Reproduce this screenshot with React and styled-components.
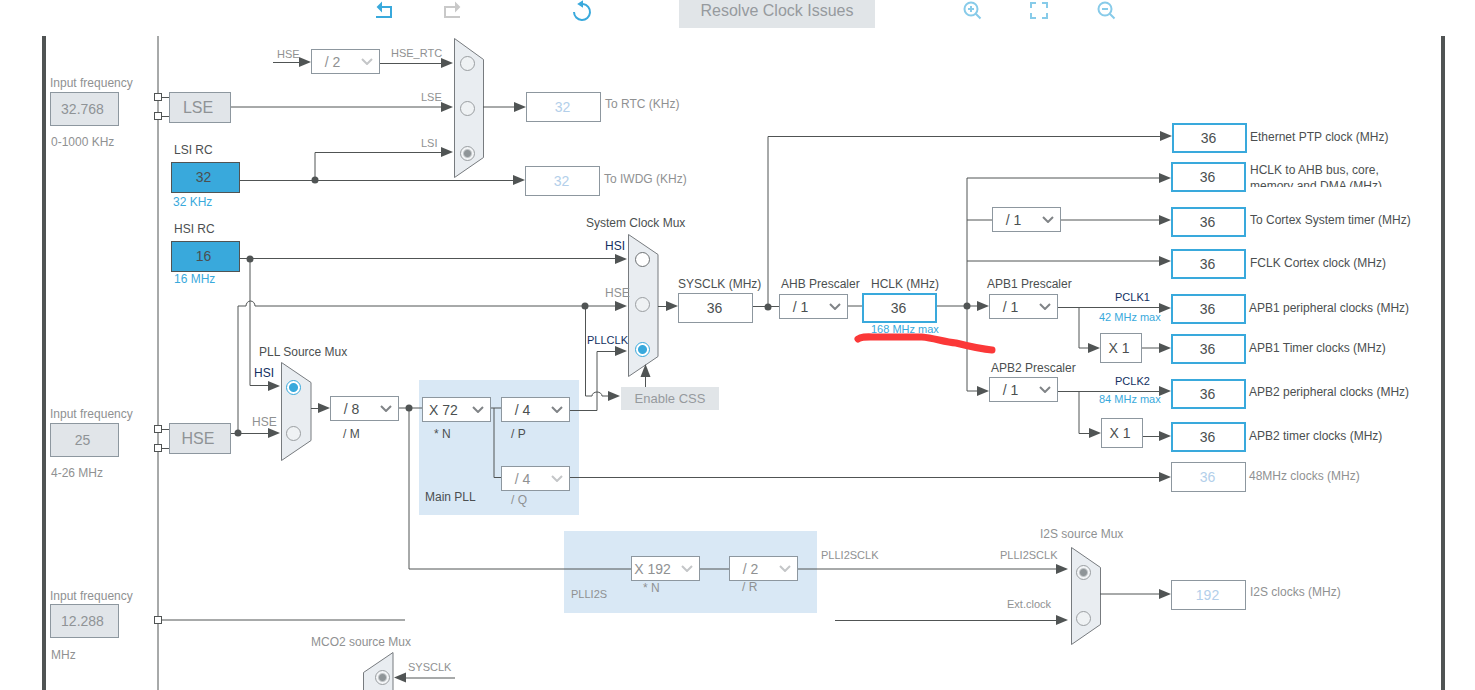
import React from "react";
import styled, { createGlobalStyle } from "styled-components";

const BLUE = "#39a9dc";
const DARK = "#505454";

// top left corner of the board, every node below is placed in window units
const ORIGIN = { x: 46, y: 36 };

const WIRES = [
  // pins
  "M158 36V690",
  "M162 97.5H169M162 116.5H169M162 429.5H169M162 448.5H169",
  "M162 620H405",
  // low speed clocks
  "M273 62.5H303",
  "M380 63.5H444",
  "M231 107H444",
  "M240 180.5H516",
  "M315 180V152.5H444",
  "M483 107H516",
  // high speed clocks
  "M240 258.5H618",
  "M250 259V385.5H272",
  "M231 433.5H272",
  "M238 433V306H246A4.5 5 0 0 1 255 306H618",
  "M585.5 306V396H592A5 4 0 0 1 602 396H610",
  "M570 410.5H597V351.5H618",
  "M645.5 387V376",
  // pll
  "M311 408.5H322",
  "M398 408H423",
  "M409 408V569H631",
  "M491 408H501",
  "M494 408V477.5H501",
  "M570 477.5H1162",
  "M699 569H729",
  "M797 569H1060",
  // system clock
  "M658 306.5H670",
  "M753 306.5H779",
  "M768 307V136.5H1162",
  "M847 306H863",
  "M937 306H980",
  "M980 391H967V178H1162",
  "M967 220H992",
  "M1060 220H1162",
  "M967 261H1162",
  "M1057 307.5H1162",
  "M1079 308V348H1090",
  "M1142 348H1162",
  "M1057 391.5H1162",
  "M1079 392V433.5H1092",
  "M1143 436.5H1162",
  // i2s
  "M835 620.5H1060",
  "M1100 594H1162",
  "M455 678H404",
];

const ARROWS = [
  [311, 62],
  [453, 63],
  [453, 107],
  [453, 152],
  [526, 107],
  [525, 180],
  [627, 259],
  [627, 306],
  [627, 351],
  [280, 386],
  [280, 433],
  [620, 396],
  [330, 408],
  [678, 306],
  [989, 306],
  [989, 391],
  [1172, 136],
  [1171, 178],
  [1171, 220],
  [1171, 261],
  [1171, 308],
  [1171, 348],
  [1171, 391],
  [1171, 436],
  [1171, 477],
  [1171, 594],
  [1100, 348],
  [1101, 433],
  [1068, 569],
  [1068, 620],
];

const DOTS = [
  [315, 180],
  [250, 259],
  [238, 433],
  [585, 306],
  [409, 408],
  [768, 307],
  [967, 306],
];

const PINS = [97, 116, 429, 448, 620];

const MUXES = [
  "454.5,38.5 483.5,59.5 483.5,157.5 454.5,177.5",
  "281.5,362.5 311,382.5 311,440.5 281.5,460.5",
  "628.5,234.5 658,254.5 658,356.5 628.5,376.5",
  "1071.5,547.5 1100.5,567.5 1100.5,624.5 1071.5,644.5",
  "393,652.5 363.5,672.5 363.5,740 393,740",
];

const RADIOS = [
  { id: "rtc-hse", group: "rtc", x: 467, y: 63, disabled: true },
  { id: "rtc-lse", group: "rtc", x: 467, y: 108, disabled: true },
  { id: "rtc-lsi", group: "rtc", x: 467, y: 153, disabled: true, on: true },
  { id: "pll-hsi", group: "pll", x: 293, y: 387, on: true },
  { id: "pll-hse", group: "pll", x: 293, y: 433, disabled: true },
  { id: "sys-hsi", group: "sys", x: 642, y: 259 },
  { id: "sys-hse", group: "sys", x: 642, y: 304, disabled: true },
  { id: "sys-pll", group: "sys", x: 642, y: 349, on: true },
  { id: "i2s-pll", group: "i2s", x: 1083, y: 572, disabled: true, on: true },
  { id: "i2s-ext", group: "i2s", x: 1083, y: 618, disabled: true },
  { id: "mco2-sys", group: "mco2", x: 382, y: 677, disabled: true, on: true },
];

const SELECTS = [
  { id: "hse-rtc-div", x: 311, y: 49, value: "/ 2", disabled: true },
  { id: "pll-m", x: 330, y: 396, value: "/ 8" },
  { id: "pll-n", x: 422, y: 397, value: "X 72" },
  { id: "pll-p", x: 501, y: 397, value: "/ 4" },
  { id: "pll-q", x: 501, y: 466, value: "/ 4", disabled: true },
  { id: "plli2s-n", x: 631, y: 556, value: "X 192", disabled: true },
  { id: "plli2s-r", x: 729, y: 556, value: "/ 2", disabled: true },
  { id: "ahb", x: 779, y: 294, value: "/ 1" },
  { id: "cortex-div", x: 992, y: 207, value: "/ 1" },
  { id: "apb1", x: 989, y: 294, value: "/ 1" },
  { id: "apb2", x: 989, y: 377, value: "/ 1" },
];

const INPUTS = [
  { id: "lse-freq", x: 50, y: 92, value: "32.768" },
  { id: "hse-freq", x: 50, y: 423, value: "25" },
  { id: "i2s-freq", x: 50, y: 604, value: "12.288" },
];

const CLOCKS = [
  { id: "rtc", x: 526, y: 92, value: "32", kind: "off" },
  { id: "iwdg", x: 525, y: 166, value: "32", kind: "off" },
  { id: "sysclk", x: 678, y: 293, value: "36", kind: "plain" },
  { id: "hclk", x: 862, y: 293, value: "36" },
  { id: "ptp", x: 1172, y: 123, value: "36" },
  { id: "ahb-bus", x: 1171, y: 162, value: "36" },
  { id: "cortex", x: 1171, y: 207, value: "36" },
  { id: "fclk", x: 1171, y: 249, value: "36" },
  { id: "apb1-per", x: 1171, y: 294, value: "36" },
  { id: "apb1-tim", x: 1171, y: 334, value: "36" },
  { id: "apb2-per", x: 1171, y: 379, value: "36" },
  { id: "apb2-tim", x: 1171, y: 422, value: "36" },
  { id: "usb48", x: 1171, y: 462, value: "36", kind: "off" },
  { id: "i2s", x: 1171, y: 580, value: "192", kind: "off" },
];

// y is the middle of the line of text
const LABELS = [
  { x: 50, y: 83, text: "Input frequency", tone: "muted", to: "lse-freq" },
  { x: 51, y: 142, text: "0-1000 KHz", tone: "muted" },
  { x: 174, y: 150, text: "LSI RC" },
  { x: 173, y: 202, text: "32 KHz", tone: "blue" },
  { x: 174, y: 229, text: "HSI RC" },
  { x: 174, y: 279, text: "16 MHz", tone: "blue" },
  { x: 50, y: 414, text: "Input frequency", tone: "muted", to: "hse-freq" },
  { x: 51, y: 473, text: "4-26 MHz", tone: "muted" },
  { x: 50, y: 596, text: "Input frequency", tone: "muted", to: "i2s-freq" },
  { x: 51, y: 655, text: "MHz", tone: "muted" },
  { x: 277, y: 54, text: "HSE", tone: "muted", small: true, to: "hse-rtc-div" },
  { x: 391, y: 53, text: "HSE_RTC", tone: "muted", small: true, to: "rtc-hse" },
  { x: 421, y: 97, text: "LSE", tone: "muted", small: true, to: "rtc-lse" },
  { x: 421, y: 143, text: "LSI", tone: "muted", small: true, to: "rtc-lsi" },
  { x: 605, y: 104, text: "To RTC (KHz)", tone: "muted", to: "rtc" },
  { x: 604, y: 179, text: "To IWDG (KHz)", tone: "muted", to: "iwdg" },
  { x: 586, y: 223, text: "System Clock Mux" },
  { x: 605, y: 246, text: "HSI", tone: "navy", to: "sys-hsi" },
  { x: 605, y: 293, text: "HSE", tone: "muted", to: "sys-hse" },
  { x: 587, y: 340, text: "PLLCLK", tone: "navy", small: true, to: "sys-pll" },
  { x: 259, y: 352, text: "PLL Source Mux" },
  { x: 254, y: 373, text: "HSI", tone: "navy", to: "pll-hsi" },
  { x: 252, y: 422, text: "HSE", tone: "muted", to: "pll-hse" },
  { x: 343, y: 434, text: "/ M", to: "pll-m" },
  { x: 434, y: 434, text: "* N", to: "pll-n" },
  { x: 511, y: 434, text: "/ P", to: "pll-p" },
  { x: 511, y: 500, text: "/ Q", tone: "muted", to: "pll-q" },
  { x: 425, y: 497, text: "Main PLL" },
  { x: 571, y: 594, text: "PLLI2S", tone: "muted", small: true },
  { x: 643, y: 588, text: "* N", tone: "muted", to: "plli2s-n" },
  { x: 742, y: 587, text: "/ R", tone: "muted", to: "plli2s-r" },
  { x: 821, y: 555, text: "PLLI2SCLK", tone: "muted", small: true },
  { x: 678, y: 284, text: "SYSCLK (MHz)", to: "sysclk" },
  { x: 781, y: 284, text: "AHB Prescaler", to: "ahb" },
  { x: 871, y: 284, text: "HCLK (MHz)", to: "hclk" },
  { x: 871, y: 329, text: "168 MHz max", tone: "blue", small: true },
  { x: 987, y: 284, text: "APB1 Prescaler", to: "apb1" },
  { x: 991, y: 368, text: "APB2 Prescaler", to: "apb2" },
  { x: 1115, y: 297, text: "PCLK1", tone: "navy", small: true },
  { x: 1099, y: 317, text: "42 MHz max", tone: "blue", small: true },
  { x: 1115, y: 381, text: "PCLK2", tone: "navy", small: true },
  { x: 1099, y: 399, text: "84 MHz max", tone: "blue", small: true },
  { x: 1250, y: 137, text: "Ethernet PTP clock (MHz)", to: "ptp" },
  { x: 1250, y: 220, text: "To Cortex System timer (MHz)", to: "cortex" },
  { x: 1250, y: 263, text: "FCLK Cortex clock (MHz)", to: "fclk" },
  { x: 1249, y: 308, text: "APB1 peripheral clocks (MHz)", to: "apb1-per" },
  { x: 1249, y: 348, text: "APB1 Timer clocks (MHz)", to: "apb1-tim" },
  { x: 1249, y: 392, text: "APB2 peripheral clocks (MHz)", to: "apb2-per" },
  { x: 1249, y: 436, text: "APB2 timer clocks (MHz)", to: "apb2-tim" },
  { x: 1249, y: 476, text: "48MHz clocks (MHz)", tone: "muted", to: "usb48" },
  { x: 1250, y: 592, text: "I2S clocks (MHz)", tone: "muted", to: "i2s" },
  { x: 1040, y: 534, text: "I2S source Mux", tone: "muted" },
  { x: 1000, y: 555, text: "PLLI2SCLK", tone: "muted", small: true, to: "i2s-pll" },
  { x: 1007, y: 604, text: "Ext.clock", tone: "muted", small: true, to: "i2s-ext" },
  { x: 311, y: 642, text: "MCO2 source Mux", tone: "muted" },
  { x: 408, y: 667, text: "SYSCLK", tone: "muted", small: true, to: "mco2-sys" },
];

const TONES = {
  text: "#4b4f50",
  muted: "#8f9192",
  blue: BLUE,
  navy: "#12305f",
};

const App = () => {
  return (
    <Page>
      <GlobalStyle />
      <Toolbar>
        <Tools $after={21}>
          <ToolButton aria-label="Undo">
            <ToolIcon $thick>
              <path d="M6 7h12v10H3" />
              <path d="M8 4L5 7l3 3z" fill="currentColor" />
            </ToolIcon>
          </ToolButton>
          <ToolButton aria-label="Redo" disabled>
            <ToolIcon $thick>
              <path d="M17 7H5v10h15" />
              <path d="M16 4l3 3-3 3z" fill="currentColor" />
            </ToolIcon>
          </ToolButton>
        </Tools>
        <ToolButton aria-label="Reset">
          <ToolIcon $thick>
            <path d="M4 12a8 8 0 1 0 9-8" />
            <path d="M12 2L9 4l3 2z" fill="currentColor" />
          </ToolIcon>
        </ToolButton>
        <ResolveButton disabled>Resolve Clock Issues</ResolveButton>
        <Tools>
          <ToolButton aria-label="Zoom in">
            <ToolIcon>
              <circle cx="11" cy="9" r="6.5" />
              <path d="M15.5 13.5L20.5 18.500M8 9h6M11 6v6" />
            </ToolIcon>
          </ToolButton>
          <ToolButton aria-label="Fit to window">
            <ToolIcon>
              <path d="M4 8V3h5M15 3h5v5M20 13v5h-5M9 18H4v-5" />
            </ToolIcon>
          </ToolButton>
          <ToolButton aria-label="Zoom out">
            <ToolIcon>
              <circle cx="11" cy="9" r="6.5" />
              <path d="M15.5 13.5L20.5 18.500M8 9h6" />
            </ToolIcon>
          </ToolButton>
        </Tools>
      </Toolbar>

      <Board>
        <Panel $x={419} $y={380} $w={160} $h={135} />
        <Panel $x={564} $y={531} $w={253} $h={82} />

        <Drawing viewBox="46 36 1395 654">
          {MUXES.map((points) => (
            <polygon key={points} points={points} fill="#e9edf1" stroke="#777b7f" />
          ))}
          {WIRES.map((d) => (
            <path key={d} d={d} fill="none" stroke={DARK} />
          ))}
          {ARROWS.map(([x, y]) => (
            <path key={`${x}-${y}`} d={`M${x} ${y}l-12-5v10z`} fill={DARK} />
          ))}
          <path d="M645.5 364l-5 13h10z" fill={DARK} />
          <path d="M394 677.5l12-5v10z" fill={DARK} />
          {DOTS.map(([x, y]) => (
            <circle key={`${x}-${y}`} cx={x} cy={y} r="3.5" fill={DARK} />
          ))}
          {PINS.map((y) => (
            <rect
              key={y}
              x="154.5"
              y={y - 3.5}
              width="7"
              height="7"
              fill="#fff"
              stroke={DARK}
            />
          ))}
        </Drawing>

        <Block $x={169} $y={92}>LSE</Block>
        <Block $x={169} $y={423}>HSE</Block>
        <Source $x={171} $y={162}>32</Source>
        <Source $x={171} $y={241}>16</Source>
        <Factor $x={1100} $y={333}>X 1</Factor>
        <Factor $x={1101} $y={418}>X 1</Factor>
        <CssButton $x={621} $y={387} disabled>
          Enable CSS
        </CssButton>

        {INPUTS.map(({ id, x, y, value }) => (
          <FrequencyInput key={id} id={id} $x={x} $y={y} defaultValue={value} disabled />
        ))}

        {CLOCKS.map(({ id, x, y, value, kind = "target" }) => (
          <ClockInput
            key={id}
            id={id}
            $x={x}
            $y={y}
            $kind={kind}
            defaultValue={value}
            disabled={kind === "off"}
          />
        ))}

        {SELECTS.map(({ id, x, y, value, disabled }) => (
          <SelectBox key={id} $x={x} $y={y} $disabled={disabled}>
            <Select id={id} aria-label={id} disabled={disabled}>
              <option>{value}</option>
            </Select>
            <Chevron viewBox="0 0 12 7">
              <path d="M1 1l5 5 5-5" />
            </Chevron>
          </SelectBox>
        ))}

        {RADIOS.map(({ id, group, x, y, disabled, on }) => (
          <Radio
            key={id}
            id={id}
            type="radio"
            name={group}
            $x={x - 7}
            $y={y - 7}
            disabled={disabled}
            defaultChecked={on}
          />
        ))}

        {LABELS.map(({ x, y, text, tone = "text", small, to }) => (
          <Label
            key={`${x}-${y}`}
            as={to ? "label" : "span"}
            htmlFor={to}
            $x={x}
            $y={y - 7}
            $tone={tone}
            $small={small}
          >
            {text}
          </Label>
        ))}
        <WrappedLabel htmlFor="ahb-bus" $x={1250} $y={162} $tone="text">
          HCLK to AHB bus, core, memory and DMA (MHz)
        </WrappedLabel>

        <Marker viewBox="46 36 1395 654">
          <path d="M858 339C862 336 868 337 880 337H922C934 338 944 342 956 343C968 346 980 349 992 350" />
        </Marker>
      </Board>
    </Page>
  );
};

const GlobalStyle = createGlobalStyle`
  * {
    box-sizing: border-box;
  }
  body {
    margin: 0;
    background: #fff;
    font-family: "Liberation Sans", Arial, sans-serif;
  }
  button,
  input,
  select {
    margin: 0;
    font-family: inherit;
  }
`;

const Page = styled.div`
  height: 100vh;
  display: flex;
  flex-direction: column;
  overflow: hidden;
`;

const Toolbar = styled.header`
  flex: 0 0 36px;
  display: flex;
  justify-content: center;
  align-items: flex-start;
  gap: 85px;
  padding-left: 16px;
`;

const Tools = styled.div`
  display: flex;
  gap: 43px;
  margin-right: ${({ $after = 0 }) => $after}px;
`;

const ToolButton = styled.button`
  width: 24px;
  height: 24px;
  padding: 0;
  border: 0;
  background: none;
  color: ${BLUE};
  &:disabled {
    color: #c9c9c9;
  }
`;

const ToolIcon = styled.svg.attrs({ viewBox: "0 0 24 24" })`
  display: block;
  width: 24px;
  height: 24px;
  fill: none;
  stroke: currentColor;
  stroke-width: 2px;
  opacity: ${({ $thick }) => ($thick ? 1 : 0.6)};
`;

const ResolveButton = styled.button`
  width: 196px;
  height: 28px;
  padding: 0 0 6px;
  border: 0;
  background: #e1e5e8;
  color: #969a9e;
  font-size: 16px;
`;

const Board = styled.main`
  position: relative;
  flex: 1;
  margin: 0 30px 0 42px;
  border: solid ${DARK};
  border-width: 0 4px;
  overflow: hidden;
`;

const Node = styled.div`
  position: absolute;
  left: ${({ $x }) => $x - ORIGIN.x}px;
  top: ${({ $y }) => $y - ORIGIN.y}px;
`;

const Panel = styled(Node)`
  width: ${({ $w }) => $w}px;
  height: ${({ $h }) => $h}px;
  background: #d9e8f5;
`;

const Drawing = styled.svg`
  position: absolute;
  left: 0;
  top: 0;
  width: 1395px;
  height: 654px;
`;

const Marker = styled(Drawing)`
  pointer-events: none;
  fill: none;
  stroke: #fb3838;
  stroke-width: 7px;
  stroke-linecap: round;
`;

const Block = styled(Node)`
  width: 62px;
  height: 31px;
  padding-right: 4px;
  border: 1px solid #8d979f;
  background: #e1e5e9;
  color: #8f9396;
  font-size: 16px;
  line-height: 29px;
  text-align: center;
`;

const Source = styled(Node)`
  width: 69px;
  height: 31px;
  padding-right: 4px;
  border: 1px solid ${DARK};
  background: ${BLUE};
  color: ${TONES.text};
  font-size: 14px;
  line-height: 29px;
  text-align: center;
`;

const Factor = styled(Node)`
  width: 42px;
  height: 30px;
  padding-right: 4px;
  border: 1px solid #8d979f;
  background: #fff;
  color: ${TONES.text};
  font-size: 14px;
  line-height: 29px;
  text-align: center;
`;

const CssButton = styled(Node).attrs({ as: "button" })`
  width: 98px;
  height: 23px;
  padding: 0;
  border: 0;
  background: #e1e5e8;
  color: #969a9e;
  font-size: 13px;
`;

const FrequencyInput = styled(Node).attrs({ as: "input" })`
  width: 69px;
  height: 34px;
  padding: 0 4px 0 0;
  border: 1px solid #8d979f;
  background: #e1e5e9;
  color: #8f9396;
  font-size: 14px;
  text-align: center;
`;

const ClockInput = styled(Node).attrs({ as: "input" })`
  width: 75px;
  height: 30px;
  padding: 0 2px 0 0;
  border: ${({ $kind }) =>
    $kind === "target" ? `2px solid ${BLUE}` : "1px solid #8d979f"};
  background: #fff;
  color: ${({ $kind }) => ($kind === "off" ? "#b3cfea" : TONES.text)};
  font-size: 14px;
  text-align: center;
`;

const SelectBox = styled(Node)`
  width: 69px;
  height: 25px;
  display: flex;
  align-items: center;
  border: 1px solid #8d979f;
  background: #fff;
  color: ${({ $disabled }) => ($disabled ? "#8f9192" : TONES.text)};
  svg {
    stroke: ${({ $disabled }) => ($disabled ? "#c4c6c8" : "#808487")};
  }
`;

const Select = styled.select`
  appearance: none;
  width: 100%;
  height: 100%;
  padding: 0 26px 0 0;
  border: 0;
  background: none;
  color: inherit;
  font-size: 14px;
  text-align: center;
  opacity: 1;
`;

const Chevron = styled.svg`
  position: absolute;
  right: 6px;
  width: 12px;
  height: 7px;
  fill: none;
  stroke-width: 2px;
  pointer-events: none;
`;

const Radio = styled(Node).attrs({ as: "input" })`
  appearance: none;
  width: 15px;
  height: 15px;
  margin: 0;
  border: 1px solid #6d7173;
  border-radius: 50%;
  background: #fff;
  &:checked {
    border-color: ${BLUE};
    background: radial-gradient(circle, ${BLUE} 4px, #fff 5px);
  }
  &:disabled {
    border-color: #9a9ea1;
    background: #eff2f4;
  }
  &:disabled:checked {
    background: radial-gradient(circle, #8f9598 3px, #f2f4f6 5px);
  }
`;

const Label = styled(Node)`
  color: ${({ $tone }) => TONES[$tone]};
  font-size: ${({ $small }) => ($small ? 11 : 12)}px;
  line-height: 14px;
  white-space: nowrap;
`;

const WrappedLabel = styled(Label).attrs({ as: "label" })`
  width: 150px;
  height: 25px;
  line-height: 16px;
  white-space: normal;
  overflow: hidden;
`;

export default App;
